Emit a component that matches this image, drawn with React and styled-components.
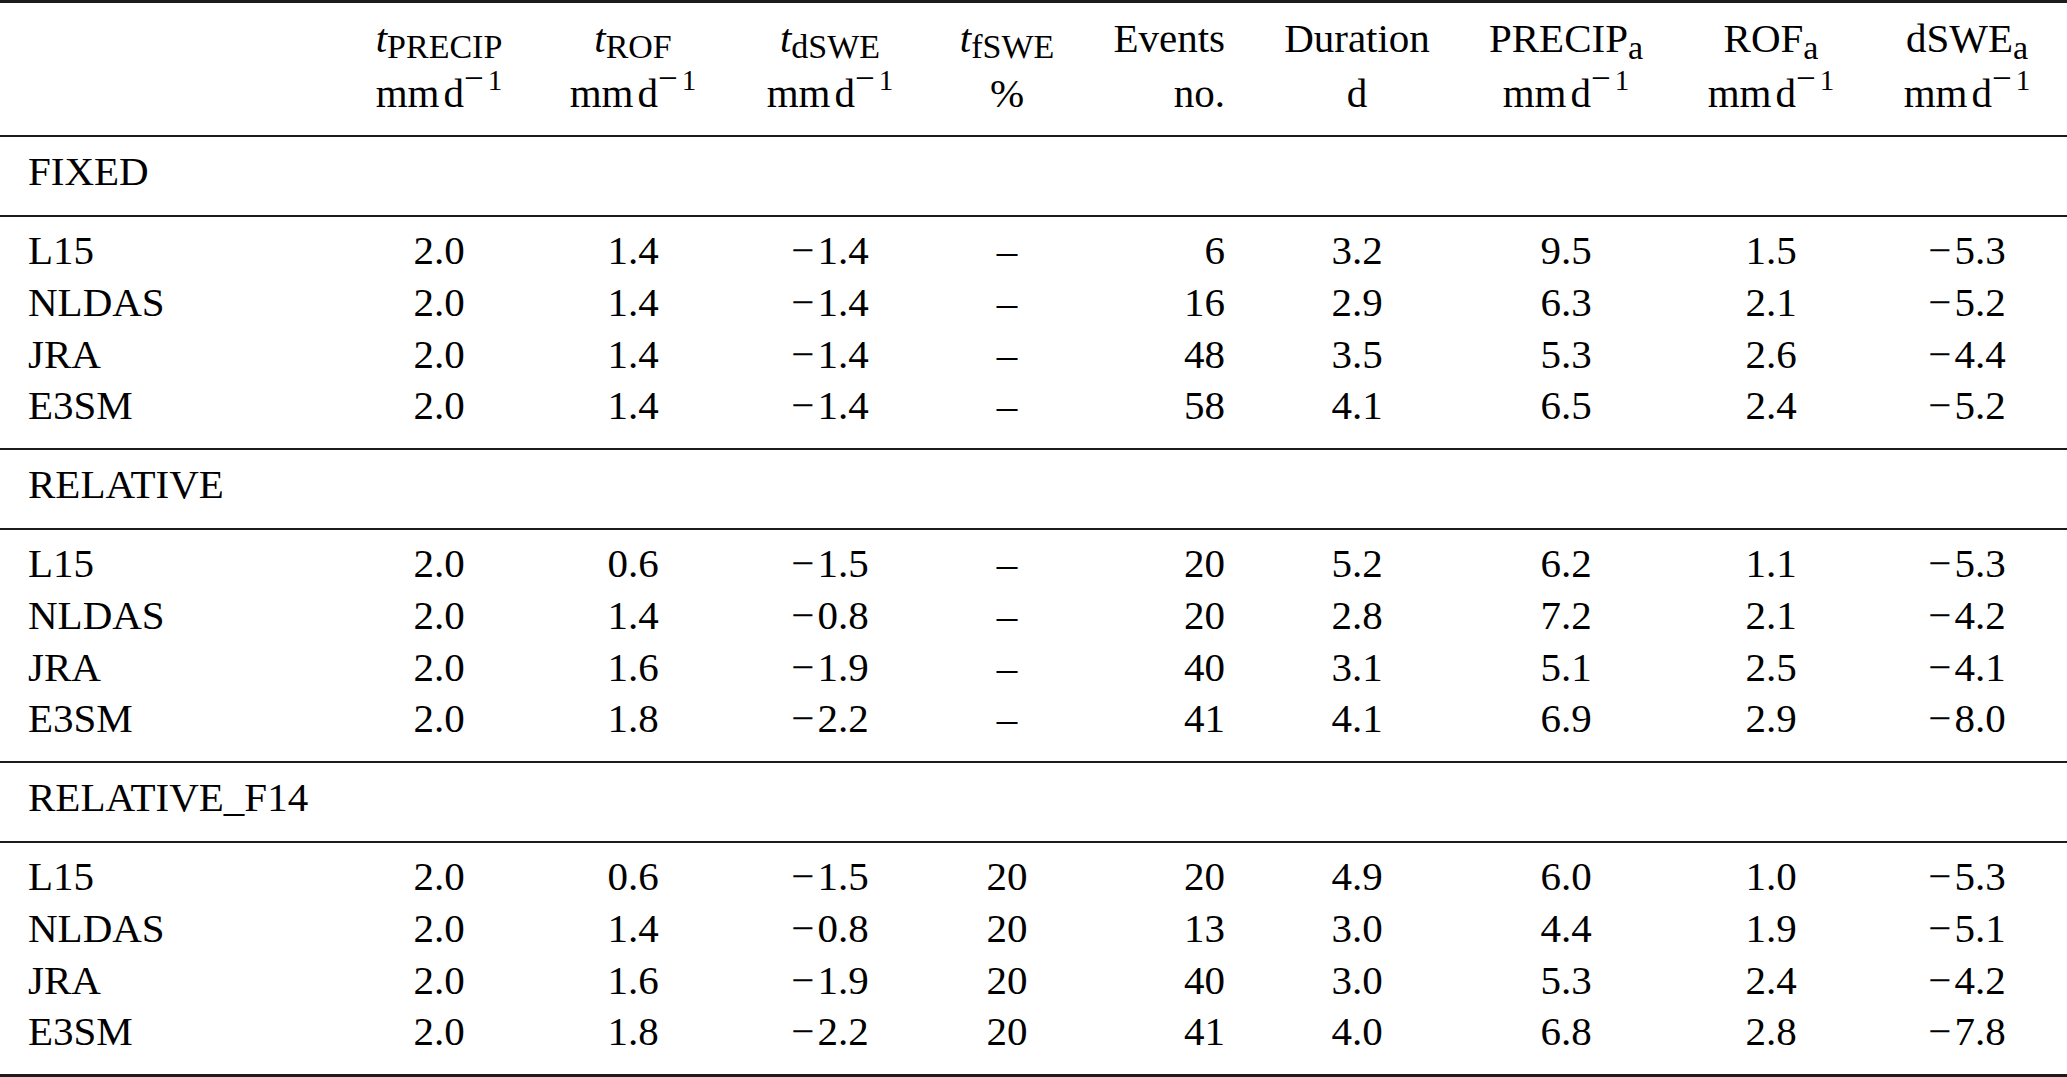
import React from "react";
import styled, { createGlobalStyle } from "styled-components";

const GlobalStyle = createGlobalStyle`
    html, body {
        margin: 0;
        padding: 0;
        background: #fff;
    }
    body {
        font-family: "Liberation Serif", "Times New Roman", serif;
        color: #000;
    }
`;

const Page = styled.div`
    width: 2067px;
    background: #fff;
`;

const Table = styled.table`
    width: 2067px;
    table-layout: fixed;
    border-collapse: separate;
    border-spacing: 0;
    font-size: 41px;
`;

const HeadCell = styled.th`
    font-weight: normal;
    text-align: ${(p) => p.$align};
    vertical-align: top;
    white-space: nowrap;
    line-height: 55px;
    padding: 7.7px ${(p) => p.$padRight}px 14px ${(p) => p.$padLeft}px;
    border-top: 3px solid #1c1c1c;
`;

const Line = styled.span`
    display: block;
`;

const Var = styled.i`
    font-style: italic;
`;

const Sub = styled.sub`
    font-size: 34px;
    line-height: 0;
    vertical-align: -6px;
`;

const SubA = styled(Sub)`
    vertical-align: -7px;
`;

const Sup = styled.sup`
    font-size: 29px;
    line-height: 0;
    vertical-align: 17px;
`;

const SupMinus = styled.span`
    font-size: 35px;
    margin-right: 4px;
`;

const D = styled.span`
    margin-left: 4px;
`;

const Minus = styled.span`
    margin-right: 3px;
`;

const GroupCell = styled.td`
    text-align: left;
    white-space: nowrap;
    line-height: 51.6px;
    padding: 9.7px 0 16.7px 28px;
    border-top: 2px solid #1c1c1c;
`;

const Cell = styled.td`
    text-align: ${(p) => p.$align};
    white-space: nowrap;
    line-height: 51.67px;
    padding: ${(p) => (p.$first ? "8.7px" : "0")} ${(p) => p.$padRight}px
        ${(p) => (p.$last ? "15.6px" : "0")} ${(p) => p.$padLeft}px;
    border-top: ${(p) => (p.$first ? "2px solid #1c1c1c" : "none")};
    border-bottom: ${(p) => (p.$end ? "3px solid #1c1c1c" : "none")};
`;

// column widths picked so the centres line up with the reference
const columns = [
    { width: 358, align: "left", padLeft: 28, padRight: 0 },
    { width: 162, align: "center", padLeft: 0, padRight: 0 },
    { width: 226, align: "center", padLeft: 0, padRight: 0 },
    { width: 168, align: "center", padLeft: 0, padRight: 0 },
    { width: 186, align: "center", padLeft: 0, padRight: 0 },
    { width: 157, align: "right", padLeft: 0, padRight: 32 },
    { width: 200, align: "center", padLeft: 0, padRight: 0 },
    { width: 218, align: "center", padLeft: 0, padRight: 0 },
    { width: 192, align: "center", padLeft: 0, padRight: 0 },
    { width: 200, align: "center", padLeft: 0, padRight: 0 },
];

const M = "\u2212";

const sections = [
    {
        name: "FIXED",
        rows: [
            ["L15", "2.0", "1.4", M + "1.4", "–", "6", "3.2", "9.5", "1.5", M + "5.3"],
            ["NLDAS", "2.0", "1.4", M + "1.4", "–", "16", "2.9", "6.3", "2.1", M + "5.2"],
            ["JRA", "2.0", "1.4", M + "1.4", "–", "48", "3.5", "5.3", "2.6", M + "4.4"],
            ["E3SM", "2.0", "1.4", M + "1.4", "–", "58", "4.1", "6.5", "2.4", M + "5.2"],
        ],
    },
    {
        name: "RELATIVE",
        rows: [
            ["L15", "2.0", "0.6", M + "1.5", "–", "20", "5.2", "6.2", "1.1", M + "5.3"],
            ["NLDAS", "2.0", "1.4", M + "0.8", "–", "20", "2.8", "7.2", "2.1", M + "4.2"],
            ["JRA", "2.0", "1.6", M + "1.9", "–", "40", "3.1", "5.1", "2.5", M + "4.1"],
            ["E3SM", "2.0", "1.8", M + "2.2", "–", "41", "4.1", "6.9", "2.9", M + "8.0"],
        ],
    },
    {
        name: "RELATIVE_F14",
        rows: [
            ["L15", "2.0", "0.6", M + "1.5", "20", "20", "4.9", "6.0", "1.0", M + "5.3"],
            ["NLDAS", "2.0", "1.4", M + "0.8", "20", "13", "3.0", "4.4", "1.9", M + "5.1"],
            ["JRA", "2.0", "1.6", M + "1.9", "20", "40", "3.0", "5.3", "2.4", M + "4.2"],
            ["E3SM", "2.0", "1.8", M + "2.2", "20", "41", "4.0", "6.8", "2.8", M + "7.8"],
        ],
    },
];

const Units = () => (
    <>
        mm<D>d</D>
        <Sup>
            <SupMinus>{M}</SupMinus>1
        </Sup>
    </>
);

const Threshold = ({ name }) => (
    <>
        <Var>t</Var>
        <Sub>{name}</Sub>
    </>
);

const Anomaly = ({ name }) => (
    <>
        {name}
        <SubA>a</SubA>
    </>
);

const Value = ({ v }) =>
    v.startsWith(M) ? (
        <>
            <Minus>{M}</Minus>
            {v.slice(1)}
        </>
    ) : (
        v
    );

const headers = [
    [null, null],
    [<Threshold name="PRECIP" />, <Units />],
    [<Threshold name="ROF" />, <Units />],
    [<Threshold name="dSWE" />, <Units />],
    [<Threshold name="fSWE" />, "%"],
    ["Events", "no."],
    ["Duration", "d"],
    [<Anomaly name="PRECIP" />, <Units />],
    [<Anomaly name="ROF" />, <Units />],
    [<Anomaly name="dSWE" />, <Units />],
];

const App = () => {
    return (
        <Page>
            <GlobalStyle />
            <Table>
                <colgroup>
                    {columns.map((c, i) => (
                        <col key={i} style={{ width: c.width }} />
                    ))}
                </colgroup>
                <thead>
                    <tr>
                        {headers.map((h, i) => (
                            <HeadCell
                                key={i}
                                $align={columns[i].align}
                                $padLeft={columns[i].padLeft}
                                $padRight={columns[i].padRight}
                            >
                                <Line>{h[0] || "\u00a0"}</Line>
                                <Line>{h[1] || "\u00a0"}</Line>
                            </HeadCell>
                        ))}
                    </tr>
                </thead>
                {sections.map((s, si) => (
                    <tbody key={s.name}>
                        <tr>
                            <GroupCell colSpan={10}>{s.name}</GroupCell>
                        </tr>
                        {s.rows.map((row, ri) => (
                            <tr key={ri}>
                                {row.map((val, ci) => (
                                    <Cell
                                        key={ci}
                                        $align={columns[ci].align}
                                        $padLeft={columns[ci].padLeft}
                                        $padRight={columns[ci].padRight}
                                        $first={ri === 0}
                                        $last={ri === s.rows.length - 1}
                                        $end={
                                            si === sections.length - 1 &&
                                            ri === s.rows.length - 1
                                        }
                                    >
                                        <Value v={val} />
                                    </Cell>
                                ))}
                            </tr>
                        ))}
                    </tbody>
                ))}
            </Table>
        </Page>
    );
};

export default App;
